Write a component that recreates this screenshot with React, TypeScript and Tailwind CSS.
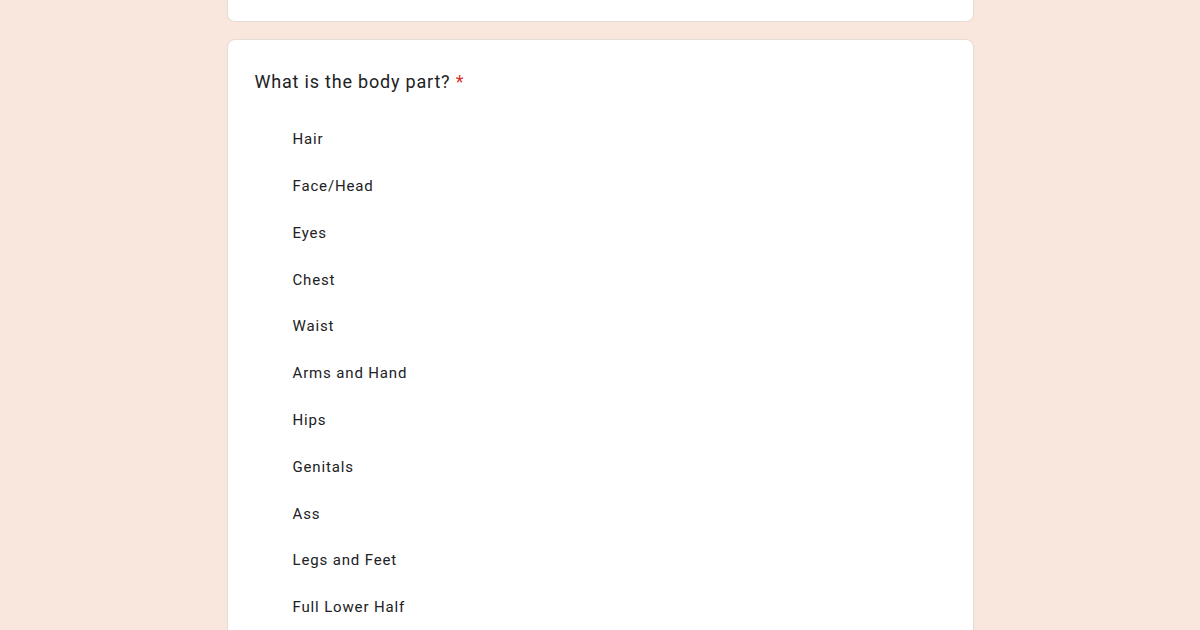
const options = [
  'Hair',
  'Face/Head',
  'Eyes',
  'Chest',
  'Waist',
  'Arms and Hand',
  'Hips',
  'Genitals',
  'Ass',
  'Legs and Feet',
  'Full Lower Half',
];

export default function App() {
  return (
    <div
      className="min-h-screen h-[630px] overflow-hidden bg-[#f9e6dc] flex flex-col items-center"
      style={{ fontFamily: 'Roboto, "Liberation Sans", sans-serif' }}
    >
      {/* previous card, mostly scrolled out of view */}
      <div className="shrink-0 w-[747px] -mt-[40px] h-[62px] bg-white rounded-lg border border-[#e4dcd6] flex items-end pb-[20px] pl-[45px]">
        <span className="text-[14px] leading-[20px] text-[#d93025]">* Indicates required question</span>
      </div>

      {/* question card */}
      <div className="mt-[17px] w-[747px] flex-1 bg-white rounded-t-lg border border-[#e4dcd6] pt-[28px] px-[27px]">
        <h2 className="text-[18px] text-[#202124] tracking-[0.8px]">
          What is the body part? <span className="text-[#d93025]">*</span>
        </h2>
        <ul className="mt-[21px] pl-[38px] flex flex-col">
          {options.map((opt) => (
            <li key={opt} className="h-[46.8px] flex items-center text-[15px] text-[#202124] tracking-[0.85px]">
              {opt}
            </li>
          ))}
        </ul>
      </div>
    </div>
  );
}
